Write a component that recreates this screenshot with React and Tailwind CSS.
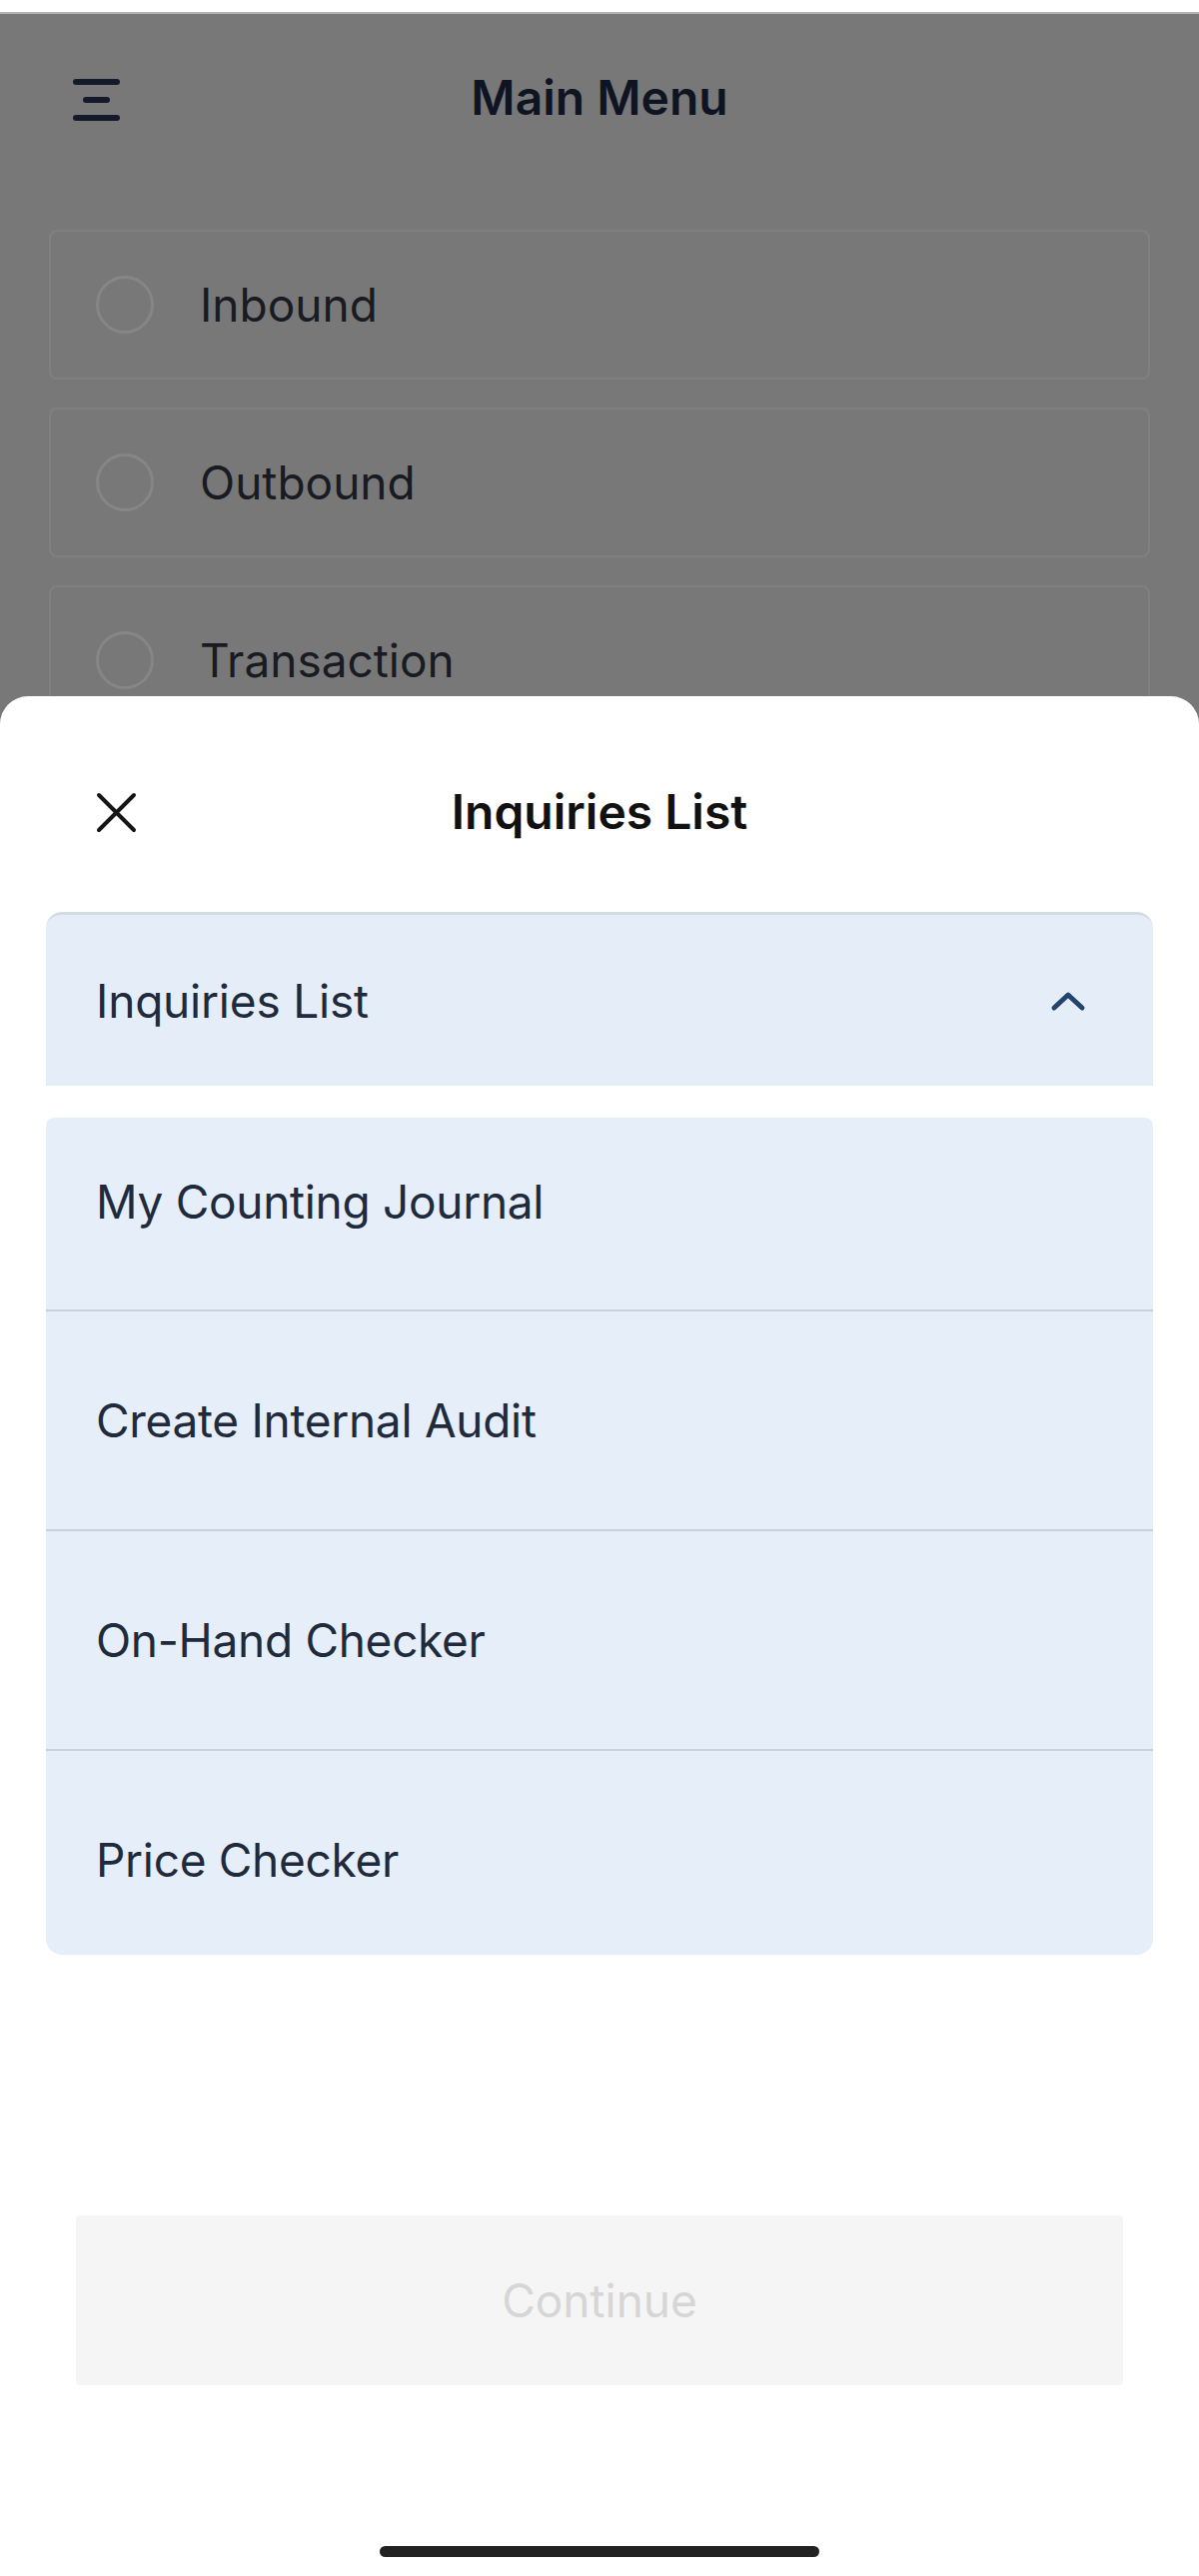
import React from 'react';

const font = { fontFamily: 'Inter, "Noto Sans", sans-serif' };

const mainItems = ['Inbound', 'Outbound', 'Transaction'];

const subItems = [
  { label: 'My Counting Journal', cls: 'h-[194px] pt-[57px] border-b-2' },
  { label: 'Create Internal Audit', cls: 'h-[220px] pt-[82px] border-b-2' },
  { label: 'On-Hand Checker', cls: 'h-[220px] pt-[82px] border-b-2' },
  { label: 'Price Checker', cls: 'h-[204px] pt-[82px]' },
];

const MenuCard = ({ label }) => (
  <div className="flex h-[150px] items-center gap-[46px] rounded-[8px] border-2 border-[#808080] px-[45px]">
    <span className="h-[58px] w-[58px] shrink-0 rounded-full border-[3px] border-[#868686]" />
    <span className="text-[46px] leading-none text-[#181b22]">{label}</span>
  </div>
);

const App = () => {
  return (
    <div className="relative h-[2579px] w-[1200px] overflow-hidden bg-[#787878]" style={font}>
      {/* status strip */}
      <div className="h-[12px] bg-white" />
      <div className="h-[2px] bg-[#b4b4b4]" />

      {/* dimmed main menu behind the sheet */}
      <header className="relative flex h-[168px] items-center justify-center">
        <div className="absolute left-[73px] top-[65px] flex w-[47px] flex-col items-center gap-[12px]">
          <span className="h-[6px] w-[47px] rounded-full bg-[#141a2a]" />
          <span className="h-[6px] w-[27px] rounded-full bg-[#141a2a]" />
          <span className="h-[6px] w-[47px] rounded-full bg-[#141a2a]" />
        </div>
        <h1 className="text-[48px] font-semibold leading-none text-[#0f1422]">Main Menu</h1>
      </header>

      <div className="mt-[48px] flex flex-col gap-[28px] px-[49px]">
        {mainItems.map((item) => (
          <MenuCard key={item} label={item} />
        ))}
      </div>

      {/* bottom sheet */}
      <div className="absolute inset-x-0 bottom-0 top-[697px] flex flex-col rounded-t-[28px] bg-white">
        <div className="relative mt-[56px] flex h-[120px] items-center justify-center">
          <svg className="absolute left-[96px] top-[40px]" width="41" height="41" viewBox="0 0 41 41">
            <path d="M3 3 L38 38 M38 3 L3 38" stroke="#151515" strokeWidth="4" strokeLinecap="round" />
          </svg>
          <h2 className="text-[48px] font-semibold leading-none text-[#111111]">Inquiries List</h2>
        </div>

        <div className="mx-[46px] mt-[40px] flex h-[174px] items-center justify-between rounded-t-[16px] border-t-[3px] border-[#d4dbe4] bg-[#e5eef8] pl-[50px] pr-[66px]">
          <span className="text-[46px] leading-none tracking-[-0.2px] text-[#1f2a3c]">Inquiries List</span>
          <svg width="38" height="22" viewBox="0 0 38 22">
            <polyline points="5,18 19,5 33,18" fill="none" stroke="#23446e" strokeWidth="5" strokeLinecap="round" strokeLinejoin="round" />
          </svg>
        </div>

        <div className="mx-[46px] mt-[32px] flex flex-col overflow-hidden rounded-b-[16px] rounded-t-[8px] bg-[#e6eff9]">
          {subItems.map((item) => (
            <div key={item.label} className={`${item.cls} border-[#c8d2de] pl-[50px]`}>
              <span className="block text-[46px] leading-[55px] tracking-[-0.3px] text-[#1f2a3c]">{item.label}</span>
            </div>
          ))}
        </div>

        <button
          type="button"
          className="mx-[76px] mt-[261px] flex h-[170px] items-center justify-center rounded-[4px] bg-[#f5f5f5] text-[46px] text-[#d6d6d6]"
        >
          Continue
        </button>

        <div className="mx-auto mt-[161px] h-[11px] w-[440px] rounded-full bg-[#222222]" />
      </div>
    </div>
  );
};

export default App;
